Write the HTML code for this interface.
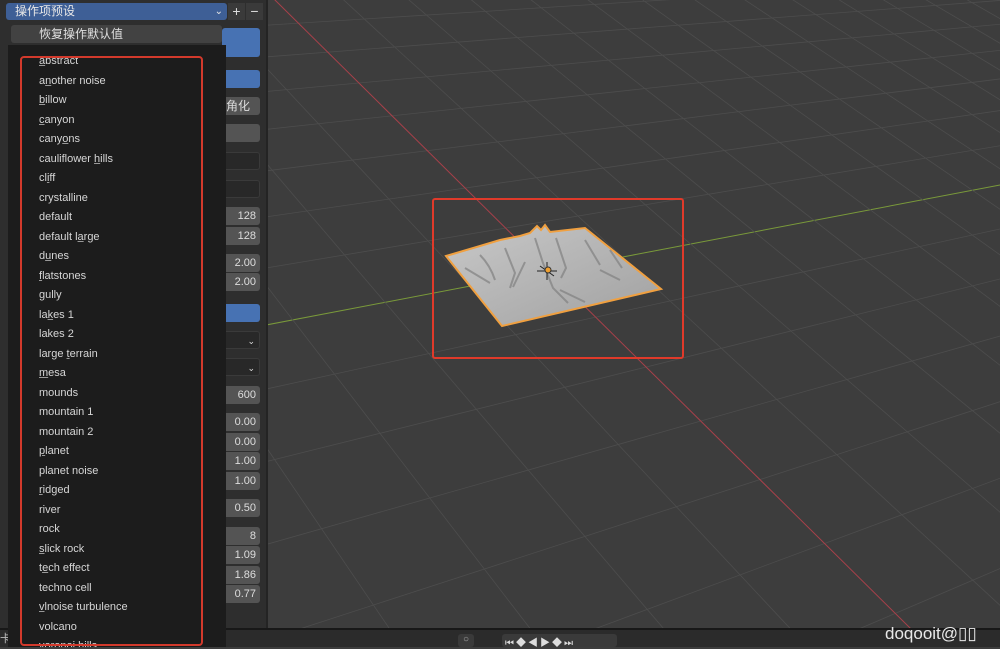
<!DOCTYPE html>
<html><head><meta charset="utf-8"><style>
*{margin:0;padding:0;box-sizing:border-box}
body{width:1000px;height:647px;overflow:hidden;background:#3d3d3d;font-family:"Liberation Sans","Noto Sans CJK SC",sans-serif;position:relative}
.abs{position:absolute}
#panel{left:0;top:0;width:268px;height:628px;background:#2e2e2e;border-right:2px solid #242424}
.f{position:absolute;left:222px;width:38px;height:18px;background:#545454;border-radius:3px;color:#ddd;font-size:11px;text-align:right;padding-right:4px;line-height:18px}
.d{background:#282828;border:1px solid #3a3a3a}
.b{background:#4772b3}
#menu{left:8px;top:45px;width:218px;height:602px;background:#1c1c1c;overflow:hidden}
.it{position:absolute;left:31px;color:#d6d6d6;font-size:11px;line-height:14px}
.it u{text-decoration:underline;text-decoration-color:#999}
</style></head><body>
<svg class="abs" style="left:0;top:0" width="1000" height="647" id="grid"></svg>
<div class="abs" style="left:0;top:628px;width:1000px;height:19px;background:#2b2b2b;border-top:2px solid #181818"></div>
<div class="abs" style="left:458px;top:634px;width:16px;height:13px;background:#3a3a3a;border-radius:3px;color:#aaa;font-size:10px;text-align:center">○</div>
<div class="abs" style="left:502px;top:634px;width:115px;height:13px;background:#3a3a3a;border-radius:3px;color:#ddd;font-size:10px;letter-spacing:2px;padding-left:3px">⏮◆◀▶◆⏭</div>
<div class="abs" style="left:0;top:630px;color:#bbb;font-size:11px">卡</div>
<div id="panel" class="abs"></div>
<div class="abs" style="left:6px;top:3px;width:221px;height:17px;background:#3e5f96;border-radius:3px;color:#e6e6e6;font-size:12px;line-height:17px;padding-left:9px">操作项预设<span style="position:absolute;right:4px;top:0;font-size:10px">⌄</span></div>
<div class="abs" style="left:228px;top:3px;width:17px;height:17px;background:#3a3a3a;color:#ddd;font-size:14px;line-height:17px;text-align:center">+</div>
<div class="abs" style="left:246px;top:3px;width:17px;height:17px;background:#3a3a3a;color:#ddd;font-size:14px;line-height:17px;text-align:center">−</div>
<div class="abs" style="left:11px;top:25px;width:211px;height:18px;background:#424242;border-radius:3px;color:#e0e0e0;font-size:12px;line-height:18px;padding-left:28px">恢复操作默认值</div>
<div class="f b" style="top:28px;height:29px"></div>
<div class="f b" style="top:70px"></div>
<div class="f" style="top:97px;text-align:left;padding-left:4px;font-size:12px">角化</div>
<div class="f" style="top:124px"></div>
<div class="f d" style="top:152px"></div>
<div class="f d" style="top:180px"></div>
<div class="f" style="top:207px">128</div>
<div class="f" style="top:227px">128</div>
<div class="f" style="top:254px">2.00</div>
<div class="f" style="top:273px">2.00</div>
<div class="f b" style="top:304px"></div>
<div class="f d" style="top:331px;font-size:9px">⌄</div>
<div class="f d" style="top:358px;font-size:9px">⌄</div>
<div class="f" style="top:386px">600</div>
<div class="f" style="top:413px">0.00</div>
<div class="f" style="top:433px">0.00</div>
<div class="f" style="top:452px">1.00</div>
<div class="f" style="top:472px">1.00</div>
<div class="f" style="top:499px">0.50</div>
<div class="f" style="top:527px">8</div>
<div class="f" style="top:546px">1.09</div>
<div class="f" style="top:566px">1.86</div>
<div class="f" style="top:585px">0.77</div>
<div id="menu" class="abs"></div>
<div class="abs" style="left:20px;top:56px;width:183px;height:590px;border:2px solid #d33a2c;border-radius:4px"></div>
<div class="abs" style="left:432px;top:198px;width:252px;height:161px;border:2px solid #e03a2a;border-radius:3px"></div>
<div class="abs" style="left:885px;top:624px;color:#e8e8e8;font-size:17px">doqooit@▯▯</div>
<script>
const items=["abstract","another noise","billow","canyon","canyons","cauliflower hills","cliff","crystalline","default","default large","dunes","flatstones","gully","lakes 1","lakes 2","large terrain","mesa","mounds","mountain 1","mountain 2","planet","planet noise","ridged","river","rock","slick rock","tech effect","techno cell","vlnoise turbulence","volcano","voronoi hills"];
const ul={"abstract":0,"another noise":1,"billow":0,"canyon":0,"canyons":4,"cliff":2,"dunes":1,"flatstones":0,"gully":0,"lakes 1":2,"mesa":0,"planet":0,"ridged":0,"slick rock":0,"tech effect":1,"vlnoise turbulence":0,"cauliflower hills":12,"default large":9,"large terrain":6};
let h="";items.forEach((s,i)=>{let t=s;if(s in ul){const k=ul[s];t=s.slice(0,k)+"<u>"+s[k]+"</u>"+s.slice(k+1);}h+=`<div class="it" style="top:${9+i*19.5}px">${t}</div>`;});
document.getElementById("menu").innerHTML=h;
const O=[549,271],A=[-45,-44.5],a=0.0367,B=[76,-14.5],bb=0.0367;
function P(u,v){const d=1+u*a+v*bb;return [O[0]+(u*A[0]+v*B[0])/d,O[1]+(u*A[1]+v*B[1])/d];}
let g="";
function line(p,q,c,w){g+=`<line x1="${p[0].toFixed(1)}" y1="${p[1].toFixed(1)}" x2="${q[0].toFixed(1)}" y2="${q[1].toFixed(1)}" stroke="${c}" stroke-width="${w}"/>`;}
for(let u=-30;u<=200;u++){const vmin=(-0.97-u*a)/bb;const v0=Math.max(vmin,-300);line(P(u,v0),P(u,3000),u==0?"#7a9a3a":"#4d4d4d",u==0?1:0.8);}
for(let v=-30;v<=200;v++){const umin=(-0.97-v*bb)/a;const u0=Math.max(umin,-300);line(P(u0,v),P(3000,v),v==0?"#a8404a":"#4d4d4d",v==0?1:0.8);}
g+=`<defs><linearGradient id="tg" x1="0" y1="0" x2="1" y2="1"><stop offset="0" stop-color="#c8c8c8"/><stop offset="1" stop-color="#a0a0a0"/></linearGradient></defs>`;
g+=`<polygon points="446,256 480,246 490,243 500,240 520,236 530,233 537,226 541,230 545,225 550,232 585,228 661,289 502,326" fill="url(#tg)" stroke="#f0a040" stroke-width="2"/>`;
g+=`<path d="M480,255 q10,10 15,25 M505,248 l10,25 l-5,15 M535,238 l8,25 l10,25 l15,15 M556,238 l10,30 l-5,10 M585,240 l15,25 M610,250 l12,18 M465,268 l25,15 M525,262 l-12,25 M560,290 l25,12 M600,270 l20,10" stroke="#808080" stroke-width="2" fill="none" opacity=".7"/>`;
g+=`<path d="M547,262 v18 M537,271 h20 M540,266 l14,10" stroke="#222" stroke-width="1"/><circle cx="548" cy="270" r="3" fill="#f0a030" stroke="#333"/>`;
document.getElementById("grid").innerHTML=g;
</script>
</body></html>
